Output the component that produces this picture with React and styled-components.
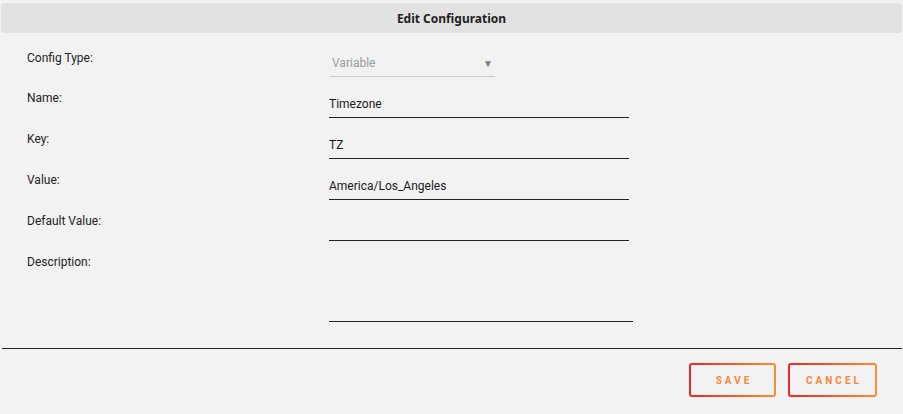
import React from "react"
import styled, { createGlobalStyle } from "styled-components"

const GlobalStyle = createGlobalStyle`
  html, body {
    margin: 0;
    padding: 0;
    background: #f2f2f2;
  }
  body {
    font-family: Roboto, "Liberation Sans", sans-serif;
    color: #222;
  }
`

const fields = [
  { label: "Name", value: "Timezone" },
  { label: "Key", value: "TZ" },
  { label: "Value", value: "America/Los_Angeles" },
  { label: "Default Value", value: "" },
]

const App = () => {
  return (
    <Page>
      <GlobalStyle />
      <Header>Edit Configuration</Header>
      <Form>
        <Row>
          <Label $top={1}>Config Type:</Label>
          <Select>
            <span>Variable</span>
            <Arrow>▼</Arrow>
          </Select>
        </Row>
        {fields.map((f) => (
          <Row key={f.label}>
            <Label>{f.label}:</Label>
            <Input defaultValue={f.value} />
          </Row>
        ))}
        <Row>
          <Label>Description:</Label>
          <TextArea />
        </Row>
      </Form>
      <Divider />
      <Footer>
        <Btn $w={87}>SAVE</Btn>
        <Btn $w={89}>CANCEL</Btn>
      </Footer>
    </Page>
  )
}
export default App

const Page = styled.div`
  width: 903px;
  height: 414px;
  padding-top: 3px;
  box-sizing: border-box;
`

const Header = styled.div`
  margin: 0 1px;
  height: 30px;
  border-radius: 4px;
  background: #e2e2e2;
  display: flex;
  align-items: center;
  justify-content: center;
  font-family: "Noto Sans", sans-serif;
  font-weight: 700;
  font-size: 12px;
  color: #1e1e1e;
`

const Form = styled.div`
  padding: 17px 0 0 27px;
  display: flex;
  flex-direction: column;
  gap: 14px;
`

const Row = styled.div`
  display: grid;
  grid-template-columns: 302px 1fr;
  align-items: start;
`

const Label = styled.div`
  font-size: 12px;
  line-height: 14px;
  color: #222;
  padding-top: ${(p) => p.$top || 0}px;
`

const Select = styled.div`
  width: 165px;
  height: 27px;
  margin-left: 1px;
  box-sizing: border-box;
  border-bottom: 1px solid #cacaca;
  display: flex;
  align-items: center;
  justify-content: space-between;
  padding: 0 2px 0 2px;
  font-size: 12px;
  color: #9a9a9a;
`

const Arrow = styled.span`
  font-size: 10px;
  color: #808080;
`

const Input = styled.input`
  width: 300px;
  height: 27px;
  box-sizing: border-box;
  border: none;
  border-bottom: 1px solid #222;
  background: transparent;
  outline: none;
  padding: 0;
  font-family: Roboto, "Liberation Sans", sans-serif;
  font-size: 12px;
  color: #1a1a1a;
`

const TextArea = styled.textarea`
  width: 304px;
  height: 67px;
  box-sizing: border-box;
  border: none;
  border-bottom: 1px solid #222;
  background: transparent;
  outline: none;
  resize: none;
  display: block;
`

const Divider = styled.div`
  margin: 26px 1px 0 2px;
  height: 1px;
  background: #222;
`

const Footer = styled.div`
  display: flex;
  justify-content: flex-end;
  gap: 12px;
  padding: 14px 26px 0 0;
`

const Btn = styled.button`
  width: ${(p) => p.$w}px;
  height: 34px;
  padding: 0 0 0 3px;
  border: 2px solid transparent;
  border-radius: 3px;
  background:
    linear-gradient(#f2f2f2, #f2f2f2) padding-box,
    linear-gradient(90deg, #e52a2a, #fb8f2e) border-box;
  font-family: Roboto, "Liberation Sans", sans-serif;
  font-weight: 700;
  font-size: 10px;
  letter-spacing: 3px;
  color: #f7873a;
  cursor: pointer;
`
